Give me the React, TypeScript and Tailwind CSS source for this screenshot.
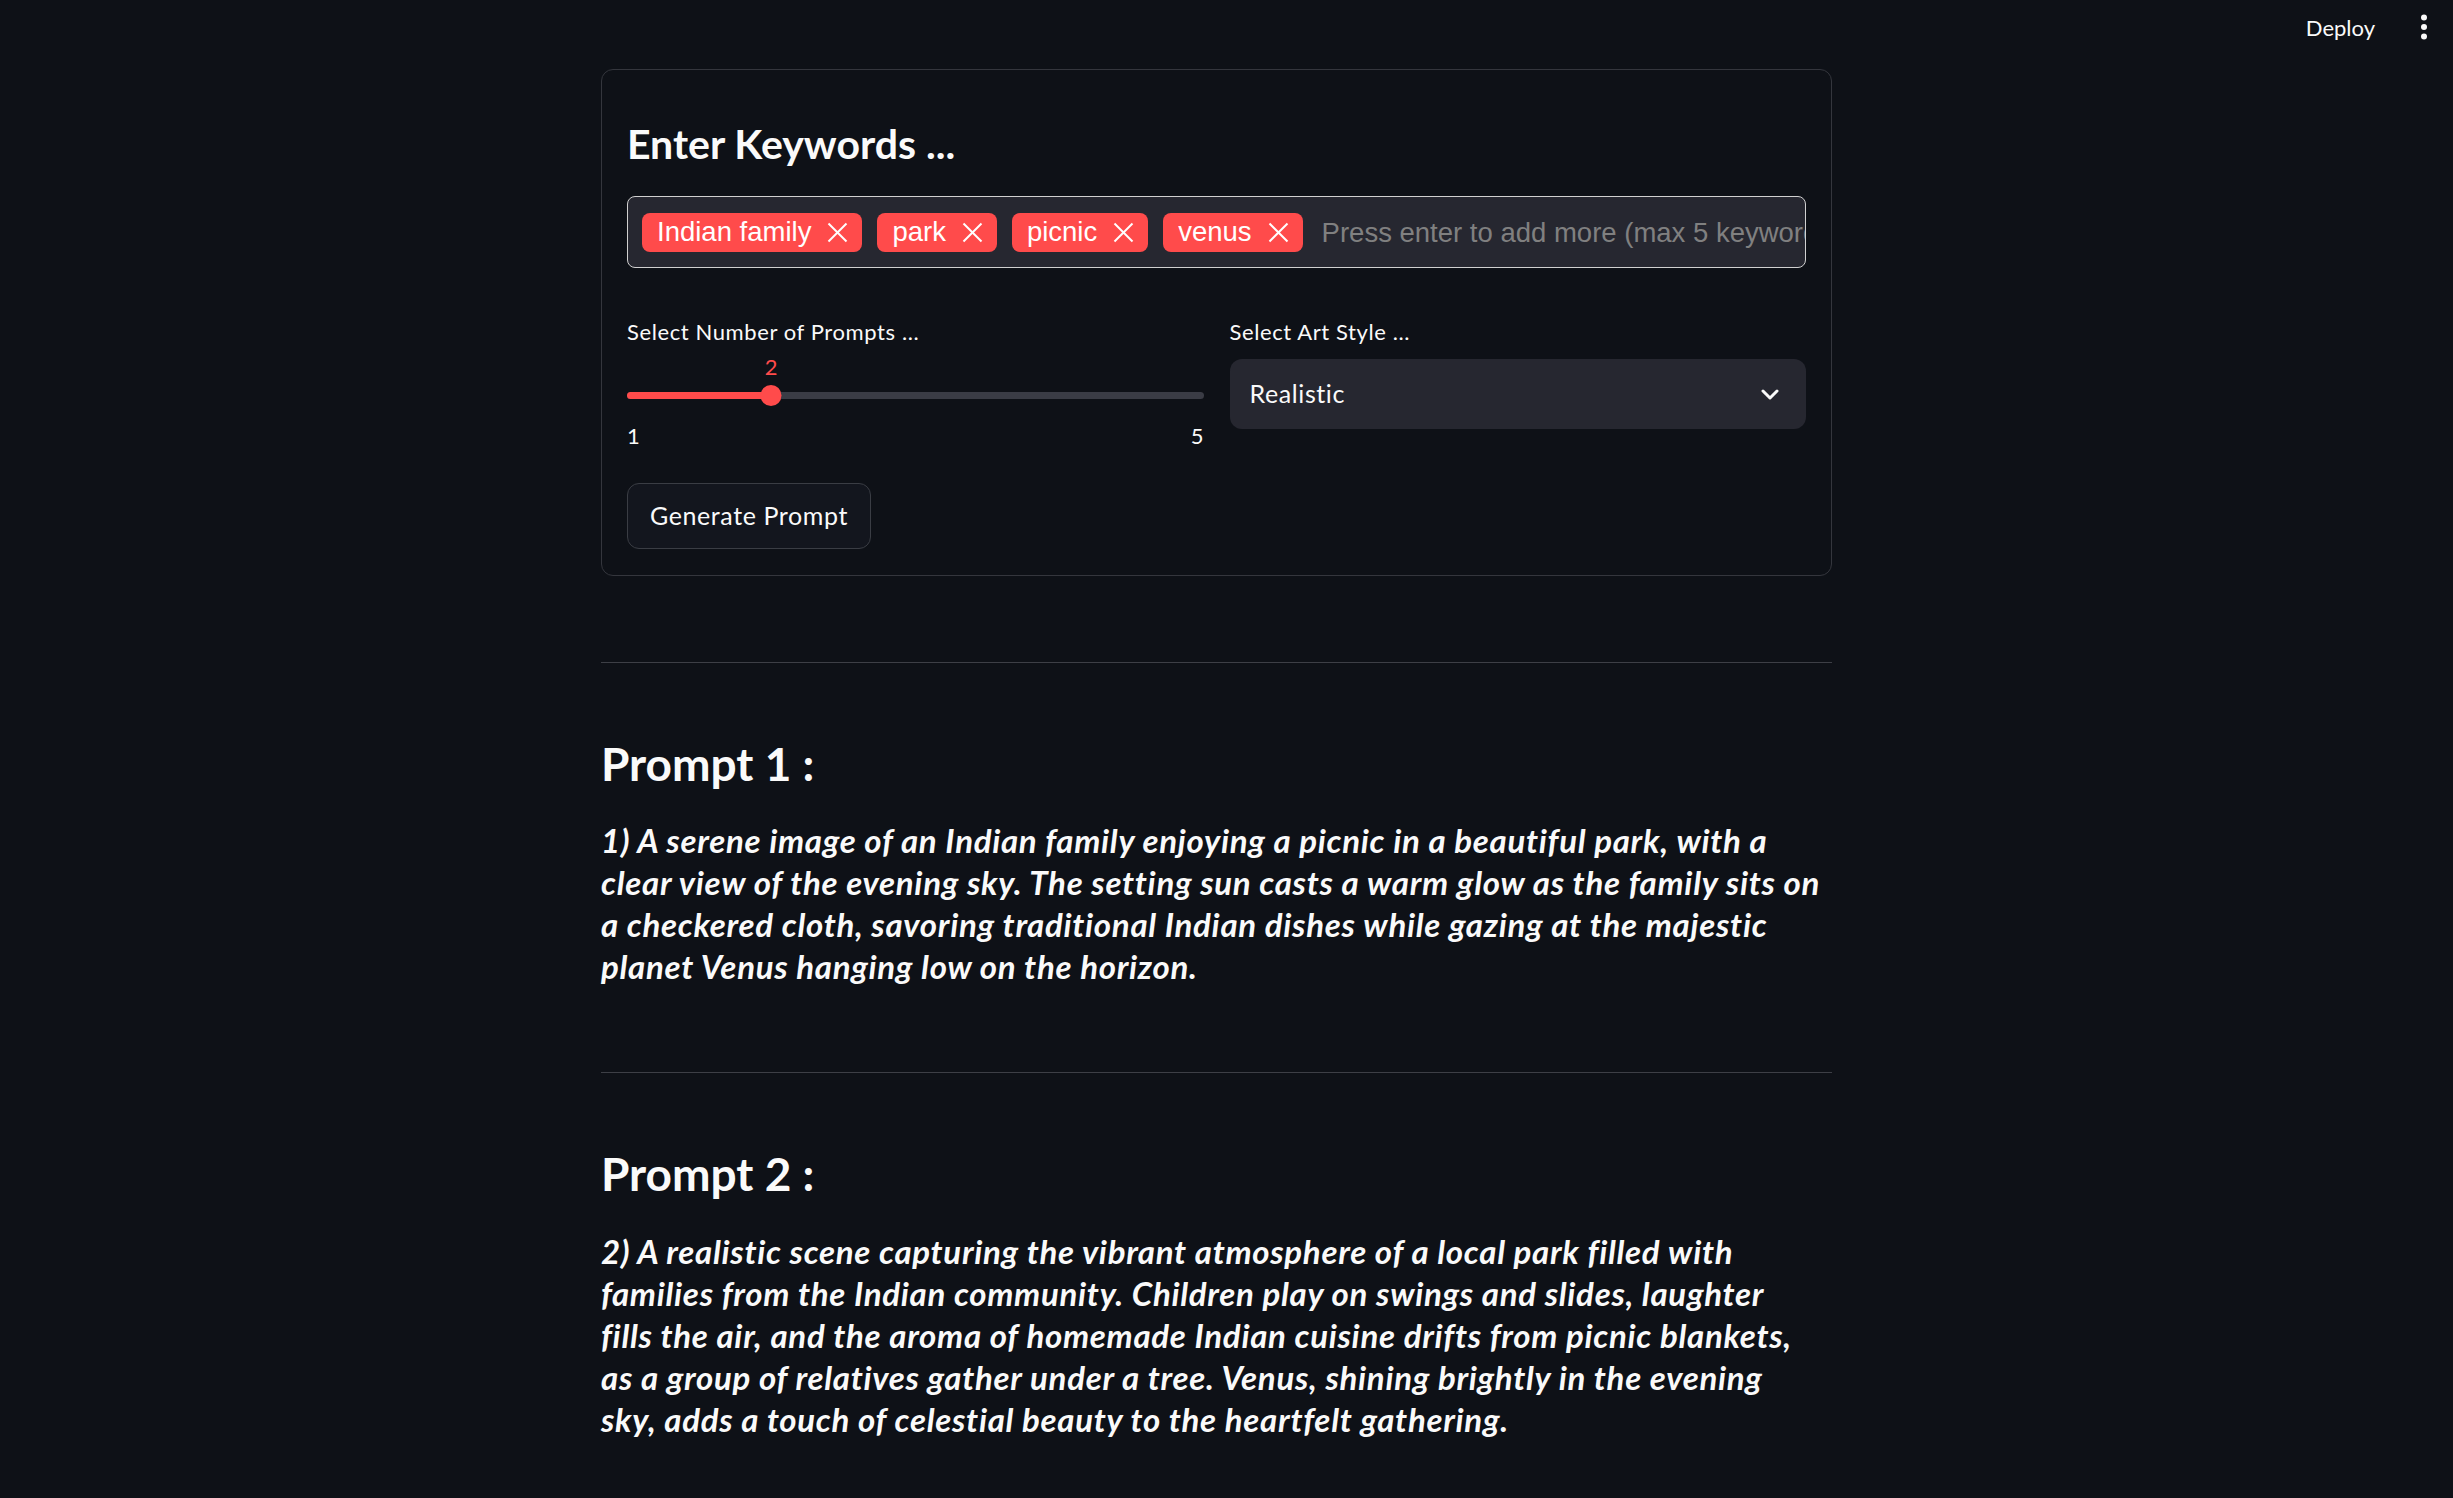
import React from 'react';

const keywords = ['Indian family', 'park', 'picnic', 'venus'];

// each prompt is kept as the lines it wraps into
const prompts = [
  [
    '1) A serene image of an Indian family enjoying a picnic in a beautiful park, with a',
    'clear view of the evening sky. The setting sun casts a warm glow as the family sits on',
    'a checkered cloth, savoring traditional Indian dishes while gazing at the majestic',
    'planet Venus hanging low on the horizon.',
  ],
  [
    '2) A realistic scene capturing the vibrant atmosphere of a local park filled with',
    'families from the Indian community. Children play on swings and slides, laughter',
    'fills the air, and the aroma of homemade Indian cuisine drifts from picnic blankets,',
    'as a group of relatives gather under a tree. Venus, shining brightly in the evening',
    'sky, adds a touch of celestial beauty to the heartfelt gathering.',
  ],
];

function CloseIcon() {
  return (
    <svg width="21" height="21" viewBox="0 0 21 21" fill="none" stroke="currentColor" strokeWidth="2">
      <line x1="1.5" y1="1.5" x2="19.5" y2="19.5" />
      <line x1="19.5" y1="1.5" x2="1.5" y2="19.5" />
    </svg>
  );
}

function Tag({ label }: { label: string }) {
  return (
    <span className="flex h-[39px] shrink-0 items-center gap-[16px] rounded-[8px] bg-[#ff4b4b] pl-[15px] pr-[14px] text-[27.5px] leading-none text-white">
      {label}
      <CloseIcon />
    </span>
  );
}

function Header() {
  return (
    <header className="flex h-[54px] items-center justify-end gap-[46px] pr-[26px] text-[22px] text-[#fafafa]">
      <span>Deploy</span>
      <svg width="6" height="26" viewBox="0 0 6 26" fill="#fafafa">
        <circle cx="3" cy="3.5" r="3" />
        <circle cx="3" cy="13" r="3" />
        <circle cx="3" cy="22.5" r="3" />
      </svg>
    </header>
  );
}

function Slider() {
  return (
    <div className="flex flex-col">
      <label className="text-[22px] leading-[25px] tracking-[0.6px] text-[#fafafa]">Select Number of Prompts ...</label>
      <div className="relative mt-[10px] h-[25px]">
        <span className="absolute left-[25%] top-0 -translate-x-1/2 text-[22px] leading-[25px] text-[#ff4b4b]">2</span>
      </div>
      <div className="relative mt-[6px] flex h-[21px] items-center">
        <div className="h-[7px] w-full rounded-full bg-[#3a3c45]">
          <div className="h-full w-[25%] rounded-full bg-[#ff4b4b]" />
        </div>
        <div className="absolute left-[25%] top-0 h-[21px] w-[21px] -translate-x-1/2 rounded-full bg-[#ff4b4b]" />
      </div>
      <div className="mt-[17px] flex justify-between text-[22px] leading-[25px] text-[#fafafa]">
        <span>1</span>
        <span>5</span>
      </div>
    </div>
  );
}

function ArtStyleSelect() {
  return (
    <div className="flex flex-col">
      <label className="text-[22px] leading-[25px] tracking-[0.6px] text-[#fafafa]">Select Art Style ...</label>
      <div className="mt-[15px] flex h-[70px] items-center justify-between rounded-[12px] bg-[#262730] pl-[20px] pr-[27px] text-[25px] tracking-[0.6px] text-[#fafafa]">
        <span>Realistic</span>
        <svg width="18" height="11" viewBox="0 0 18 11" fill="none" stroke="#fafafa" strokeWidth="3" strokeLinecap="round" strokeLinejoin="round">
          <polyline points="2,2 9,9 16,2" />
        </svg>
      </div>
    </div>
  );
}

function PromptBlock({ index, lines }: { index: number; lines: string[] }) {
  return (
    <section className="flex flex-col">
      <hr className={`${index === 1 ? 'mt-[86px]' : 'mt-[85px]'} border-0 border-t border-[#3d3f46]`} />
      <h2 className="mt-[73px] text-[46px] font-bold leading-[1.2] text-[#fafafa]">Prompt {index} :</h2>
      <p className="mt-[28px] text-[33px] font-bold italic leading-[42px] tracking-[0.7px] text-[#fafafa]">
        {lines.map((l, i) => (
          <span key={i} className="block whitespace-nowrap">
            {l}
          </span>
        ))}
      </p>
    </section>
  );
}

export default function App() {
  return (
    <div className="min-h-screen bg-[#0e1117] font-['Lato',sans-serif]">
      <Header />
      <div className="flex justify-center pr-[20px] pb-[60px]">
        <main className="flex w-[1231px] flex-col">
          <div className="mt-[15px] flex flex-col rounded-[12px] border border-[#34363d] px-[25px] pb-[26px] pt-[49px]">
            <h3 className="text-[41px] font-bold leading-[1.2] text-[#fafafa]">Enter Keywords ...</h3>
            <div className="mt-[28px] flex h-[72px] items-center gap-[15px] overflow-hidden rounded-[8px] border border-[#d0d0d0] bg-[#262730] pl-[14px] font-['Liberation_Sans',Arial,sans-serif]">
              {keywords.map((k) => (
                <Tag key={k} label={k} />
              ))}
              <span className="ml-[4px] whitespace-nowrap text-[27.5px] text-[#808080]">
                Press enter to add more (max 5 keywords)
              </span>
            </div>
            <div className="mt-[51px] grid grid-cols-2 gap-[26px]">
              <Slider />
              <ArtStyleSelect />
            </div>
            <button className="mt-[35px] h-[66px] w-[244px] rounded-[12px] border border-[#3a3d44] bg-[#13161e] text-[25px] tracking-[0.6px] text-[#fafafa]">
              Generate Prompt
            </button>
          </div>
          {prompts.map((p, i) => (
            <PromptBlock key={i} index={i + 1} lines={p} />
          ))}
        </main>
      </div>
    </div>
  );
}
